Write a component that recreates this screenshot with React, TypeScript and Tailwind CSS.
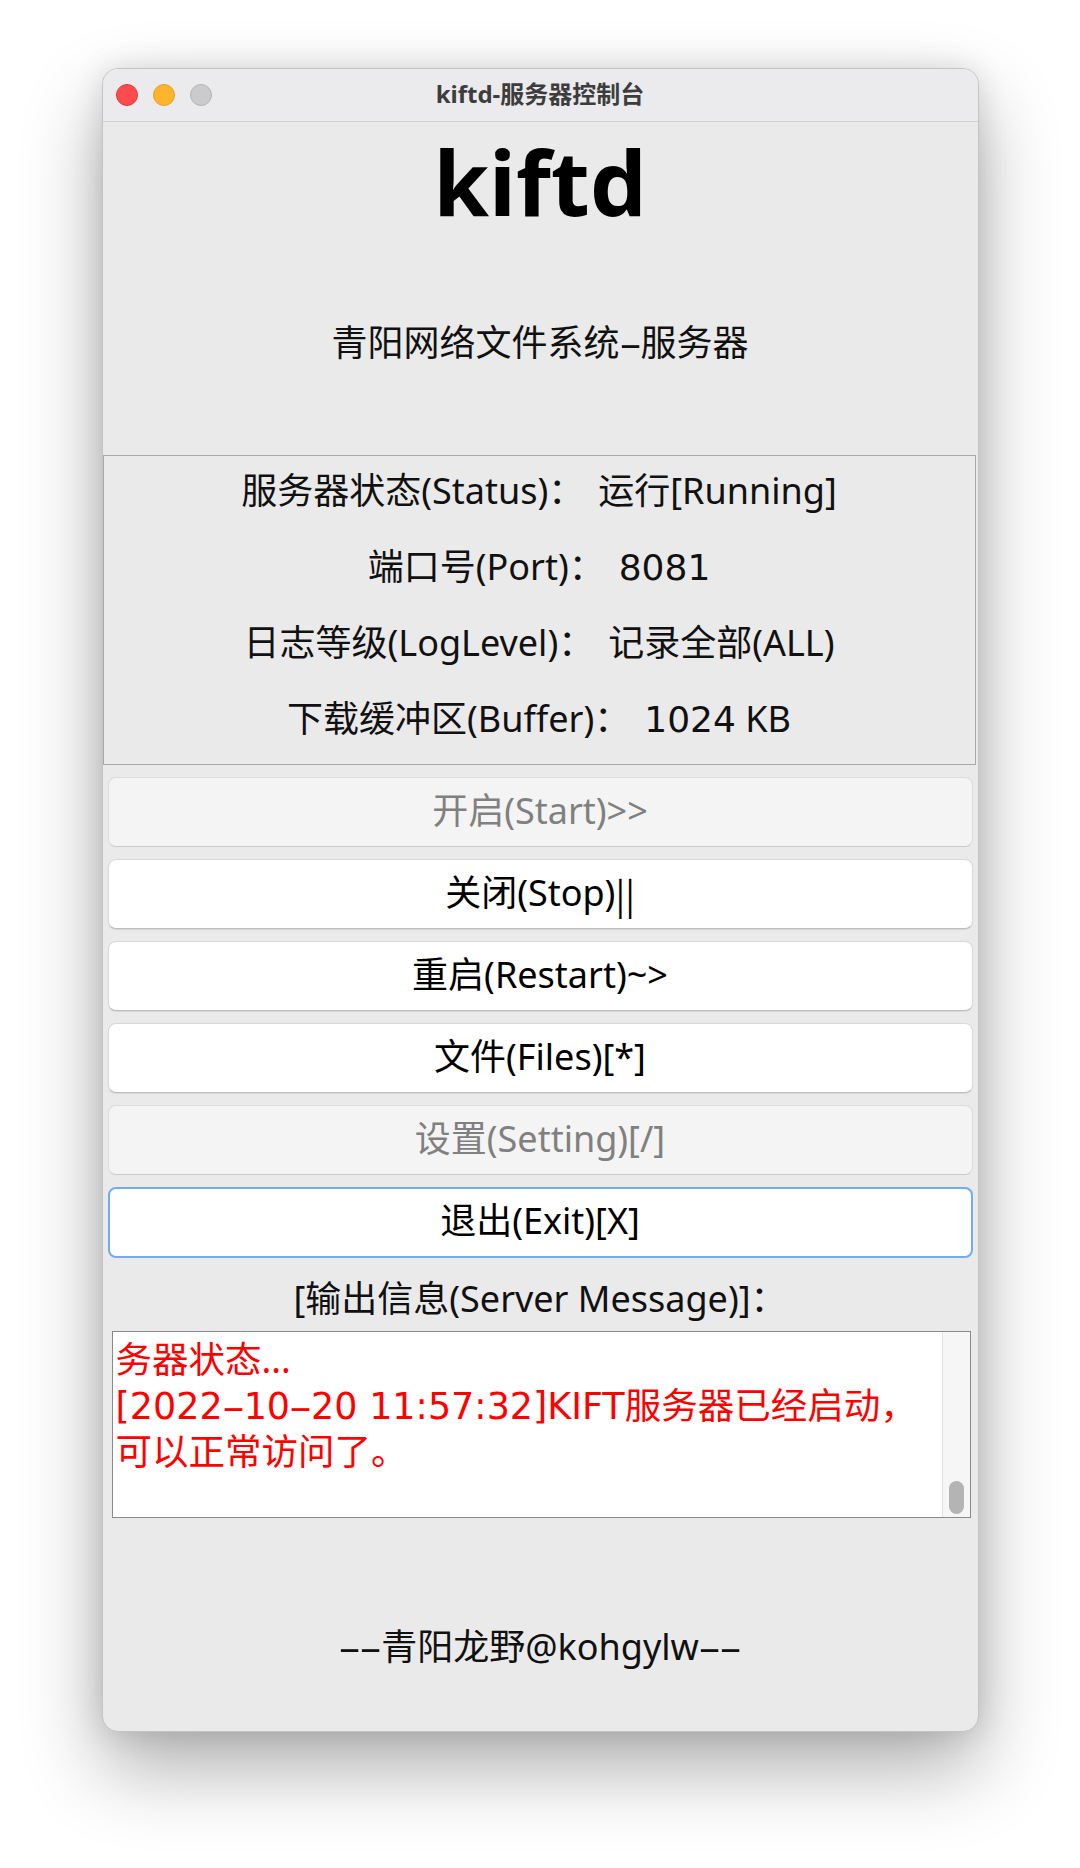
import React from "react";

// digits in the reference are wider than Noto's, DejaVu matches them
const Num = ({ children }: { children: React.ReactNode }) => (
	<span className="font-['DejaVu_Sans',sans-serif] leading-[0px]">{children}</span>
);

// the reference draws hyphens as long dashes
const Dash = () => (
	<span className="inline-block w-[21px] scale-x-[2] text-center leading-[0px]">-</span>
);

const infoRows: { label: string; value: React.ReactNode }[] = [
	{ label: "服务器状态(Status)：", value: "运行[Running]" },
	{ label: "端口号(Port)：", value: <Num>8081</Num> },
	{ label: "日志等级(LogLevel)：", value: "记录全部(ALL)" },
	{
		label: "下载缓冲区(Buffer)：",
		value: (
			<>
				<Num>1024</Num> KB
			</>
		),
	},
];

type BtnState = "disabled" | "normal" | "focused";

const buttons: { key: string; label: React.ReactNode; state: BtnState }[] = [
	{ key: "start", label: "开启(Start)>>", state: "disabled" },
	{
		key: "stop",
		label: (
			<>
				关闭(Stop)<span className="font-['Noto_Sans_CJK_SC',sans-serif]">||</span>
			</>
		),
		state: "normal",
	},
	{ key: "restart", label: "重启(Restart)~>", state: "normal" },
	{ key: "files", label: "文件(Files)[*]", state: "normal" },
	{ key: "setting", label: "设置(Setting)[/]", state: "disabled" },
	{ key: "exit", label: "退出(Exit)[X]", state: "focused" },
];

const ActionButton = ({
	label,
	state,
}: {
	label: React.ReactNode;
	state: BtnState;
}) => {
	if (state === "disabled") {
		return (
			<div className="flex h-[70px] items-center justify-center rounded-[8px] border border-[#dcdcdc] border-b-[#c9c9c9] bg-[#f4f4f4] pb-[2px] text-[36px] leading-[36px] text-[#808080]">
				{label}
			</div>
		);
	}
	if (state === "focused") {
		return (
			<div className="flex h-[71px] items-center justify-center rounded-[8px] border-2 border-[#72acef] bg-white pb-[3px] text-[36px] leading-[36px] text-black">
				{label}
			</div>
		);
	}
	return (
		<div className="flex h-[70px] items-center justify-center rounded-[8px] border border-[#d9d9d9] border-b-[#bcbcbc] bg-white pb-[2px] text-[36px] leading-[36px] text-black shadow-[0_1px_1px_rgba(0,0,0,0.08)]">
			{label}
		</div>
	);
};

export default function App() {
	return (
		<div className="h-[1868px] w-[1080px] overflow-hidden bg-white pt-[68px] font-['Noto_Sans','Noto_Sans_CJK_SC',sans-serif]">
			<div className="mx-auto flex h-[1664px] w-[877px] flex-col overflow-hidden rounded-[16px] border border-[#c4c4c4] bg-[#eaeaea] shadow-[0_36px_80px_rgba(0,0,0,0.32),0_0_30px_rgba(0,0,0,0.12)]">
				{/* title bar */}
				<div className="relative flex h-[53px] shrink-0 items-center border-b border-[#cfcfcf] bg-[#ebebed] pl-[13px]">
					<div className="flex gap-[15px]">
						<span className="h-[22px] w-[22px] rounded-full border border-[#e2393c] bg-[#fe4b4e]" />
						<span className="h-[22px] w-[22px] rounded-full border border-[#e3a023] bg-[#feb42c]" />
						<span className="h-[22px] w-[22px] rounded-full border border-[#b4b4b6] bg-[#cbcbcd]" />
					</div>
					<div className="absolute inset-0 flex items-center justify-center pb-[2px] text-[24px] font-bold text-[#3d3d3d]">
						kiftd-服务器控制台
					</div>
				</div>

				{/* header */}
				<div className="mt-[14px] text-center text-[90px] font-bold leading-[90px] text-black">
					kiftd
				</div>
				<div className="mt-[99px] h-[36px] text-center text-[36px] leading-[36px] text-[#111]">
					青阳网络文件系统<Dash />服务器
				</div>

				{/* info panel */}
				<div className="mt-[94px] flex w-[873px] flex-col border border-[#a8a8a8] pb-[4px]">
					{infoRows.map((row) => (
						<div
							key={row.label}
							className="flex h-[76px] items-center justify-center pb-[7px] text-[36px] leading-[36px] text-[#111]"
						>
							<span>{row.label}</span>
							<span className="ml-[14px]">{row.value}</span>
						</div>
					))}
				</div>

				{/* buttons */}
				<div className="ml-[5px] mt-[12px] flex w-[865px] flex-col gap-[12px]">
					{buttons.map((b) => (
						<ActionButton key={b.key} label={b.label} state={b.state} />
					))}
				</div>

				<div className="mt-[23px] text-center text-[36px] leading-[36px] text-[#111]">
					[输出信息(Server Message)]：
				</div>

				{/* message area */}
				<div className="ml-[9px] mt-[14px] flex h-[187px] w-[859px] border border-[#8a8a8a] bg-white">
					<div className="flex-1 overflow-hidden pl-[3px] pt-[4px] text-[36.5px] leading-[46px] text-[#ff0000]">
						<div className="h-[46px] whitespace-nowrap">务器状态...</div>
						<div className="h-[46px] whitespace-nowrap">
							<Num>[2022</Num>
							<Dash />
							<Num>10</Num>
							<Dash />
							<Num>20 11:57:32]KIFT</Num>服务器已经启动，
						</div>
						<div className="h-[46px] whitespace-nowrap">可以正常访问了。</div>
					</div>
					<div className="flex w-[28px] flex-col justify-end border-l border-[#e2e2e2] bg-[#f6f6f6] pb-[3px] pl-[6px]">
						<div className="h-[33px] w-[15px] rounded-full bg-[#b4b4b4]" />
					</div>
				</div>

				<div className="mt-[111px] h-[36px] text-center text-[36px] leading-[36px] text-[#111]">
					<Dash />
					<Dash />
					青阳龙野@kohgylw
					<Dash />
					<Dash />
				</div>
			</div>
		</div>
	);
}
